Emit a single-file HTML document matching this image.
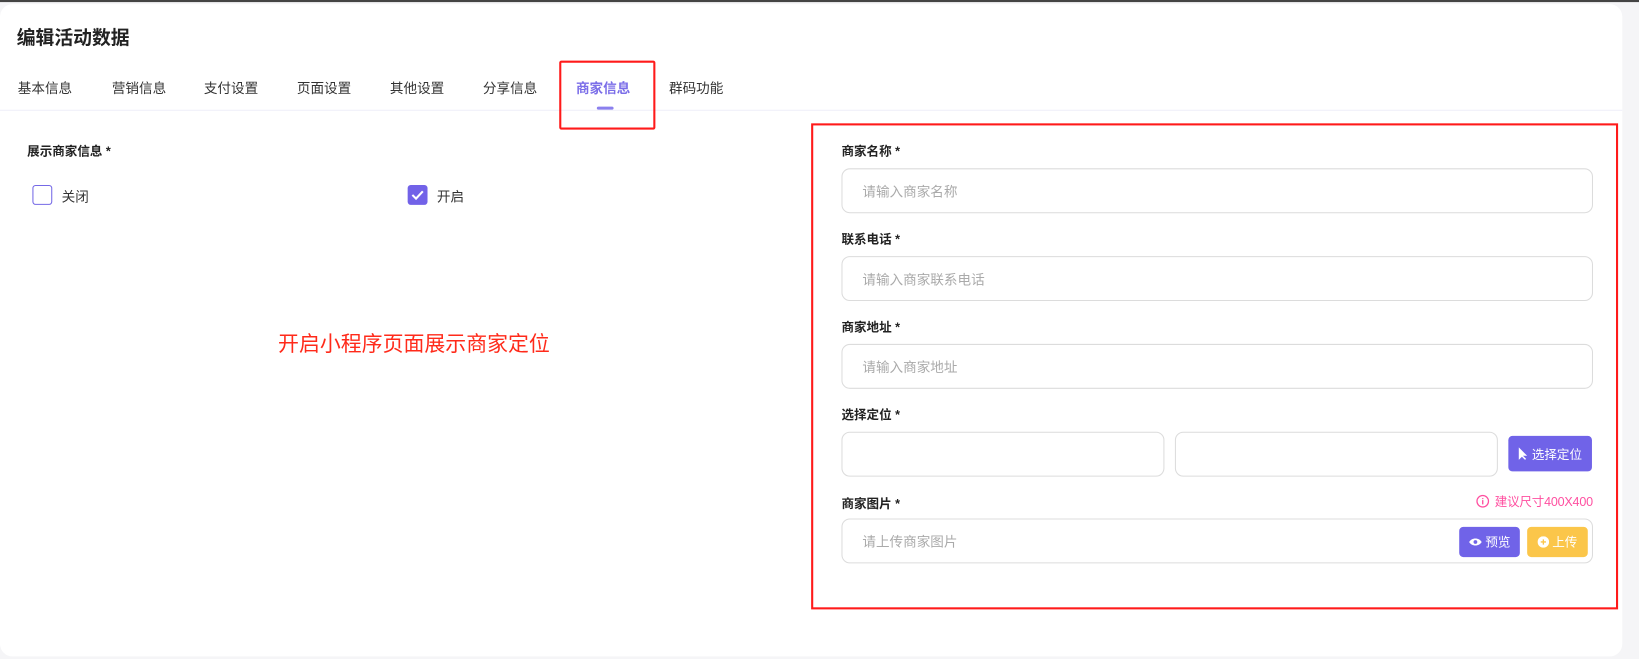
<!DOCTYPE html>
<html><head><meta charset="utf-8"><style>
*{box-sizing:border-box;margin:0;padding:0}
body{width:1639px;height:658px;background:#f5f5f7;font-family:"Liberation Sans","Noto Sans CJK SC",sans-serif;overflow:hidden;color:#333}
#w{position:absolute;left:0;top:0;width:1568px;height:630px;transform:scale(1.04528);transform-origin:0 0}
.topline{position:absolute;left:0;top:0;width:1568px;height:2px;background:#444}
.card{position:absolute;left:0;top:4px;width:1552px;height:624px;background:#fff;border-radius:12px}
.a{position:absolute;white-space:nowrap}
.title{left:16px;top:22px;font-size:18px;font-weight:bold;color:#222}
.tab{top:74px;font-size:13px;color:#333}
.line{left:0;top:105px;width:1552px;height:1px;background:#eeeef8}
.lbl{font-size:12px;font-weight:bold;color:#222}
.inp{position:absolute;border:1px solid #dcdcdc;border-radius:8px;background:#fff;font-size:13px;color:#aaa;padding-left:19px;display:flex;align-items:center}
.btn{position:absolute;border-radius:4px;color:#fff;font-size:12px;display:flex;align-items:center;justify-content:center;gap:3px}
.red{position:absolute;border:2px solid #ff1a1a}
</style></head><body><div id="w">
<div class="topline"></div>
<div class="card"></div>
<div class="a title">编辑活动数据</div>
<div class="a tab" style="left:17px">基本信息</div>
<div class="a tab" style="left:107px">营销信息</div>
<div class="a tab" style="left:195px">支付设置</div>
<div class="a tab" style="left:284px">页面设置</div>
<div class="a tab" style="left:373px">其他设置</div>
<div class="a tab" style="left:462px">分享信息</div>
<div class="a tab" style="left:551px;color:#7b6ee8;font-weight:bold">商家信息</div>
<div class="a" style="left:571px;top:102px;width:16px;height:3px;border-radius:2px;background:#8b80ee"></div>
<div class="a tab" style="left:640px">群码功能</div>
<div class="a line"></div>
<div class="red" style="left:535px;top:58px;width:92px;height:66px;border-radius:2px"></div>

<div class="a lbl" style="left:26px;top:136px">展示商家信息 *</div>
<div class="a" style="left:31px;top:177px;width:19px;height:19px;border:1.5px solid #7569e6;border-radius:3px"></div>
<div class="a" style="left:59px;top:178px;font-size:13px">关闭</div>
<div class="a" style="left:390px;top:177px;width:19px;height:19px;background:#7262e8;border-radius:3px"><svg width="19" height="19" viewBox="0 0 19 19"><path d="M4.5 9.5l3.5 3.5 6.5-7" stroke="#fff" stroke-width="2" fill="none"/></svg></div>
<div class="a" style="left:418px;top:178px;font-size:13px">开启</div>
<div class="a" style="left:266px;top:313px;font-size:20px;color:#ff2a1a">开启小程序页面展示商家定位</div>

<div class="red" style="left:776px;top:118px;width:772px;height:465px"></div>
<div class="a lbl" style="left:805px;top:136px">商家名称 *</div>
<div class="inp" style="left:805px;top:161px;width:719px;height:43px">请输入商家名称</div>
<div class="a lbl" style="left:805px;top:220px">联系电话 *</div>
<div class="inp" style="left:805px;top:245px;width:719px;height:43px">请输入商家联系电话</div>
<div class="a lbl" style="left:805px;top:304px">商家地址 *</div>
<div class="inp" style="left:805px;top:329px;width:719px;height:43px">请输入商家地址</div>
<div class="a lbl" style="left:805px;top:388px">选择定位 *</div>
<div class="inp" style="left:805px;top:413px;width:309px;height:43px"></div>
<div class="inp" style="left:1124px;top:413px;width:309px;height:43px"></div>
<div class="btn" style="left:1443px;top:417px;width:80px;height:34px;background:#7063e8"><svg width="10" height="12" viewBox="0 0 10 12"><path d="M1 0v12l3-3 3 3 1-1-3-3h4z" fill="#fff"/></svg>选择定位</div>
<div class="a lbl" style="left:805px;top:473px">商家图片 *</div>
<div class="a" style="left:1412px;top:471px;font-size:12px;color:#ff4fa0;display:flex;align-items:center;gap:5px;letter-spacing:-0.2px"><svg width="13" height="13" viewBox="0 0 13 13"><circle cx="6.5" cy="6.5" r="5.5" stroke="#ff4fa0" fill="none" stroke-width="1.2"/><path d="M6.5 5.5v4M6.5 3.5v1" stroke="#ff4fa0" stroke-width="1.3"/></svg>建议尺寸400X400</div>
<div class="inp" style="left:805px;top:496px;width:719px;height:43px">请上传商家图片</div>
<div class="btn" style="left:1396px;top:504px;width:58px;height:29px;background:#7063e8"><svg width="13" height="9" viewBox="0 0 13 9"><path d="M0.5 4.5C3 0 10 0 12.5 4.5 10 9 3 9 0.5 4.5z" fill="#fff"/><circle cx="6.5" cy="4.5" r="1.8" fill="#7063e8"/></svg>预览</div>
<div class="btn" style="left:1461px;top:504px;width:58px;height:29px;background:#fbc64a"><svg width="11" height="11" viewBox="0 0 11 11"><circle cx="5.5" cy="5.5" r="5.5" fill="#fff"/><path d="M5.5 3v5M3 5.5h5" stroke="#fbc64a" stroke-width="1.3"/></svg>上传</div>
</div></body></html>
